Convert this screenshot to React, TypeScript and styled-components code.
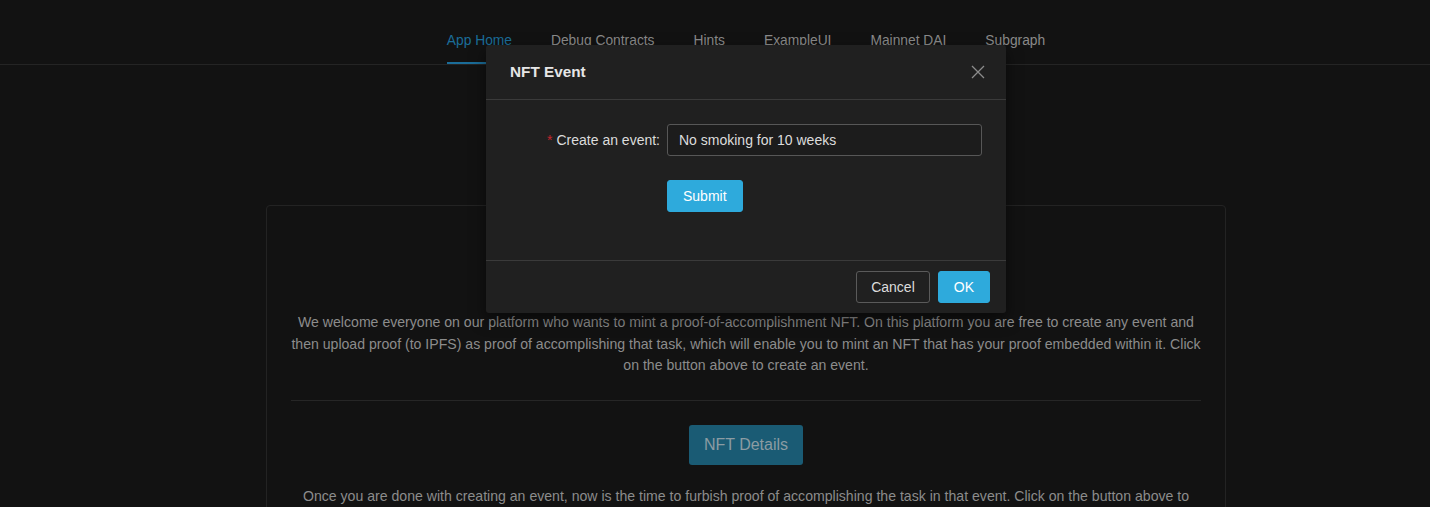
import styled, { createGlobalStyle } from "styled-components";

const GlobalStyle = createGlobalStyle`
  html, body {
    margin: 0;
    padding: 0;
    background: #121212;
    overflow: hidden;
  }
  * { box-sizing: border-box; }
`;

// Whole page, content centred a little to the right of the window centre.
const Page = styled.div`
  position: relative;
  height: 507px;
  padding-left: 62px;
  background: #121212;
  font-family: "Liberation Sans", Arial, sans-serif;
  font-size: 14px;
  color: #8c8c8c;
  overflow: hidden;
`;

const Nav = styled.nav`
  display: flex;
  justify-content: center;
  gap: 39px;
  padding-top: 18px;
  border-bottom: 1px solid #242424;
  margin-left: -62px;
  padding-left: 62px;
`;

const NavItem = styled.a<{ $active?: boolean }>`
  display: block;
  height: 46px;
  line-height: 46px;
  font-size: 13.8px;
  color: ${(p) => (p.$active ? "#1b6d99" : "#8a8a8a")};
  border-bottom: 2px solid ${(p) => (p.$active ? "#1b6d99" : "transparent")};
  text-decoration: none;
  cursor: pointer;
`;

const Main = styled.main`
  display: flex;
  justify-content: center;
  padding-top: 140px;
`;

const Card = styled.section`
  width: 960px;
  border: 1px solid #232323;
  border-radius: 4px;
  padding: 24px 24px 0;
  text-align: center;
`;

const SectionButton = styled.button`
  height: 40px;
  padding: 0 15px;
  border: none;
  border-radius: 3px;
  background: #1a5b74;
  color: #8b9ca3;
  font-family: inherit;
  font-size: 16px;
  cursor: pointer;
`;

const Paragraph = styled.p`
  margin: 21px 0 23px;
  line-height: 21.5px;
  font-size: 14.1px;
  color: #8c8c8c;
`;

const Divider = styled.hr`
  margin: 0 0 24px;
  border: none;
  border-top: 1px solid #262626;
`;

const Spacer = styled.div`
  height: 21px;
`;

// Modal overlay lying over the page.
const Overlay = styled.div`
  position: absolute;
  inset: 0;
  display: flex;
  justify-content: center;
  align-items: flex-start;
  padding: 45px 0 0 62px;
`;

const Dialog = styled.div`
  width: 520px;
  background: #202020;
  border-radius: 3px;
  box-shadow: 0 6px 16px rgba(0, 0, 0, 0.5);
  color: #dcdcdc;
`;

const DialogHeader = styled.header`
  display: flex;
  align-items: center;
  justify-content: space-between;
  height: 55px;
  padding: 0 16px 0 24px;
  border-bottom: 1px solid #3a3a3a;
`;

const DialogTitle = styled.h3`
  margin: 0;
  font-size: 15.3px;
  font-weight: 700;
  color: #e6e6e6;
`;

const CloseButton = styled.button`
  display: flex;
  width: 24px;
  height: 24px;
  align-items: center;
  justify-content: center;
  padding: 0;
  border: none;
  background: none;
  cursor: pointer;
`;

const DialogBody = styled.div`
  padding: 24px 24px 48px;
`;

const FormRow = styled.div`
  display: grid;
  grid-template-columns: 157px 1fr;
  align-items: center;
  margin-bottom: 24px;

  &:last-child {
    margin-bottom: 0;
  }
`;

const Label = styled.label`
  justify-self: end;
  padding-right: 7px;
  color: #dcdcdc;
  white-space: nowrap;
`;

const Required = styled.span`
  margin-right: 4px;
  color: #c0252c;
`;

const Input = styled.input`
  width: 100%;
  height: 32px;
  padding: 4px 11px;
  border: 1px solid #575757;
  border-radius: 3px;
  background: #1c1c1c;
  color: #dcdcdc;
  font-family: inherit;
  font-size: 14px;
  outline: none;
`;

const Button = styled.button<{ $primary?: boolean }>`
  height: 32px;
  padding: 0 ${(p) => (p.$primary ? 15 : 14)}px;
  border: 1px solid ${(p) => (p.$primary ? "#2eaadc" : "#5a5a5a")};
  border-radius: 3px;
  background: ${(p) => (p.$primary ? "#2eaadc" : "transparent")};
  color: ${(p) => (p.$primary ? "#ffffff" : "#dcdcdc")};
  font-family: inherit;
  font-size: 14px;
  cursor: pointer;
`;

const SubmitCell = styled.div`
  grid-column: 2;
`;

const DialogFooter = styled.footer`
  display: flex;
  justify-content: flex-end;
  gap: 8px;
  padding: 10px 16px;
  border-top: 1px solid #3a3a3a;
`;

const tabs = ["App Home", "Debug Contracts", "Hints", "ExampleUI", "Mainnet DAI", "Subgraph"];

export default function App() {
  return (
    <>
      <GlobalStyle />
      <Page>
        <Nav>
          {tabs.map((t, i) => (
            <NavItem key={t} $active={i === 0}>
              {t}
            </NavItem>
          ))}
        </Nav>
        <Main>
          <Card>
            <Spacer />
            <SectionButton>Create an Event</SectionButton>
            <Paragraph>
              We welcome everyone on our platform who wants to mint a proof-of-accomplishment NFT. On this
              platform you are free to create any event and then upload proof (to IPFS) as proof of
              accomplishing that task, which will enable you to mint an NFT that has your proof embedded
              within it. Click on the button above to create an event.
            </Paragraph>
            <Divider />
            <SectionButton>NFT Details</SectionButton>
            <Paragraph>
              Once you are done with creating an event, now is the time to furbish proof of accomplishing
              the task in that event. Click on the button above to upload your proof and mint your NFT.
            </Paragraph>
          </Card>
        </Main>
        <Overlay>
          <Dialog>
            <DialogHeader>
              <DialogTitle>NFT Event</DialogTitle>
              <CloseButton aria-label="Close">
                <svg width="14" height="14" viewBox="0 0 14 14">
                  <path d="M1 1 L13 13 M13 1 L1 13" stroke="#8c8c8c" strokeWidth="1.3" fill="none" />
                </svg>
              </CloseButton>
            </DialogHeader>
            <DialogBody>
              <FormRow>
                <Label>
                  <Required>*</Required>Create an event:
                </Label>
                <Input defaultValue="No smoking for 10 weeks" />
              </FormRow>
              <FormRow>
                <SubmitCell>
                  <Button $primary>Submit</Button>
                </SubmitCell>
              </FormRow>
            </DialogBody>
            <DialogFooter>
              <Button>Cancel</Button>
              <Button $primary>OK</Button>
            </DialogFooter>
          </Dialog>
        </Overlay>
      </Page>
    </>
  );
}
